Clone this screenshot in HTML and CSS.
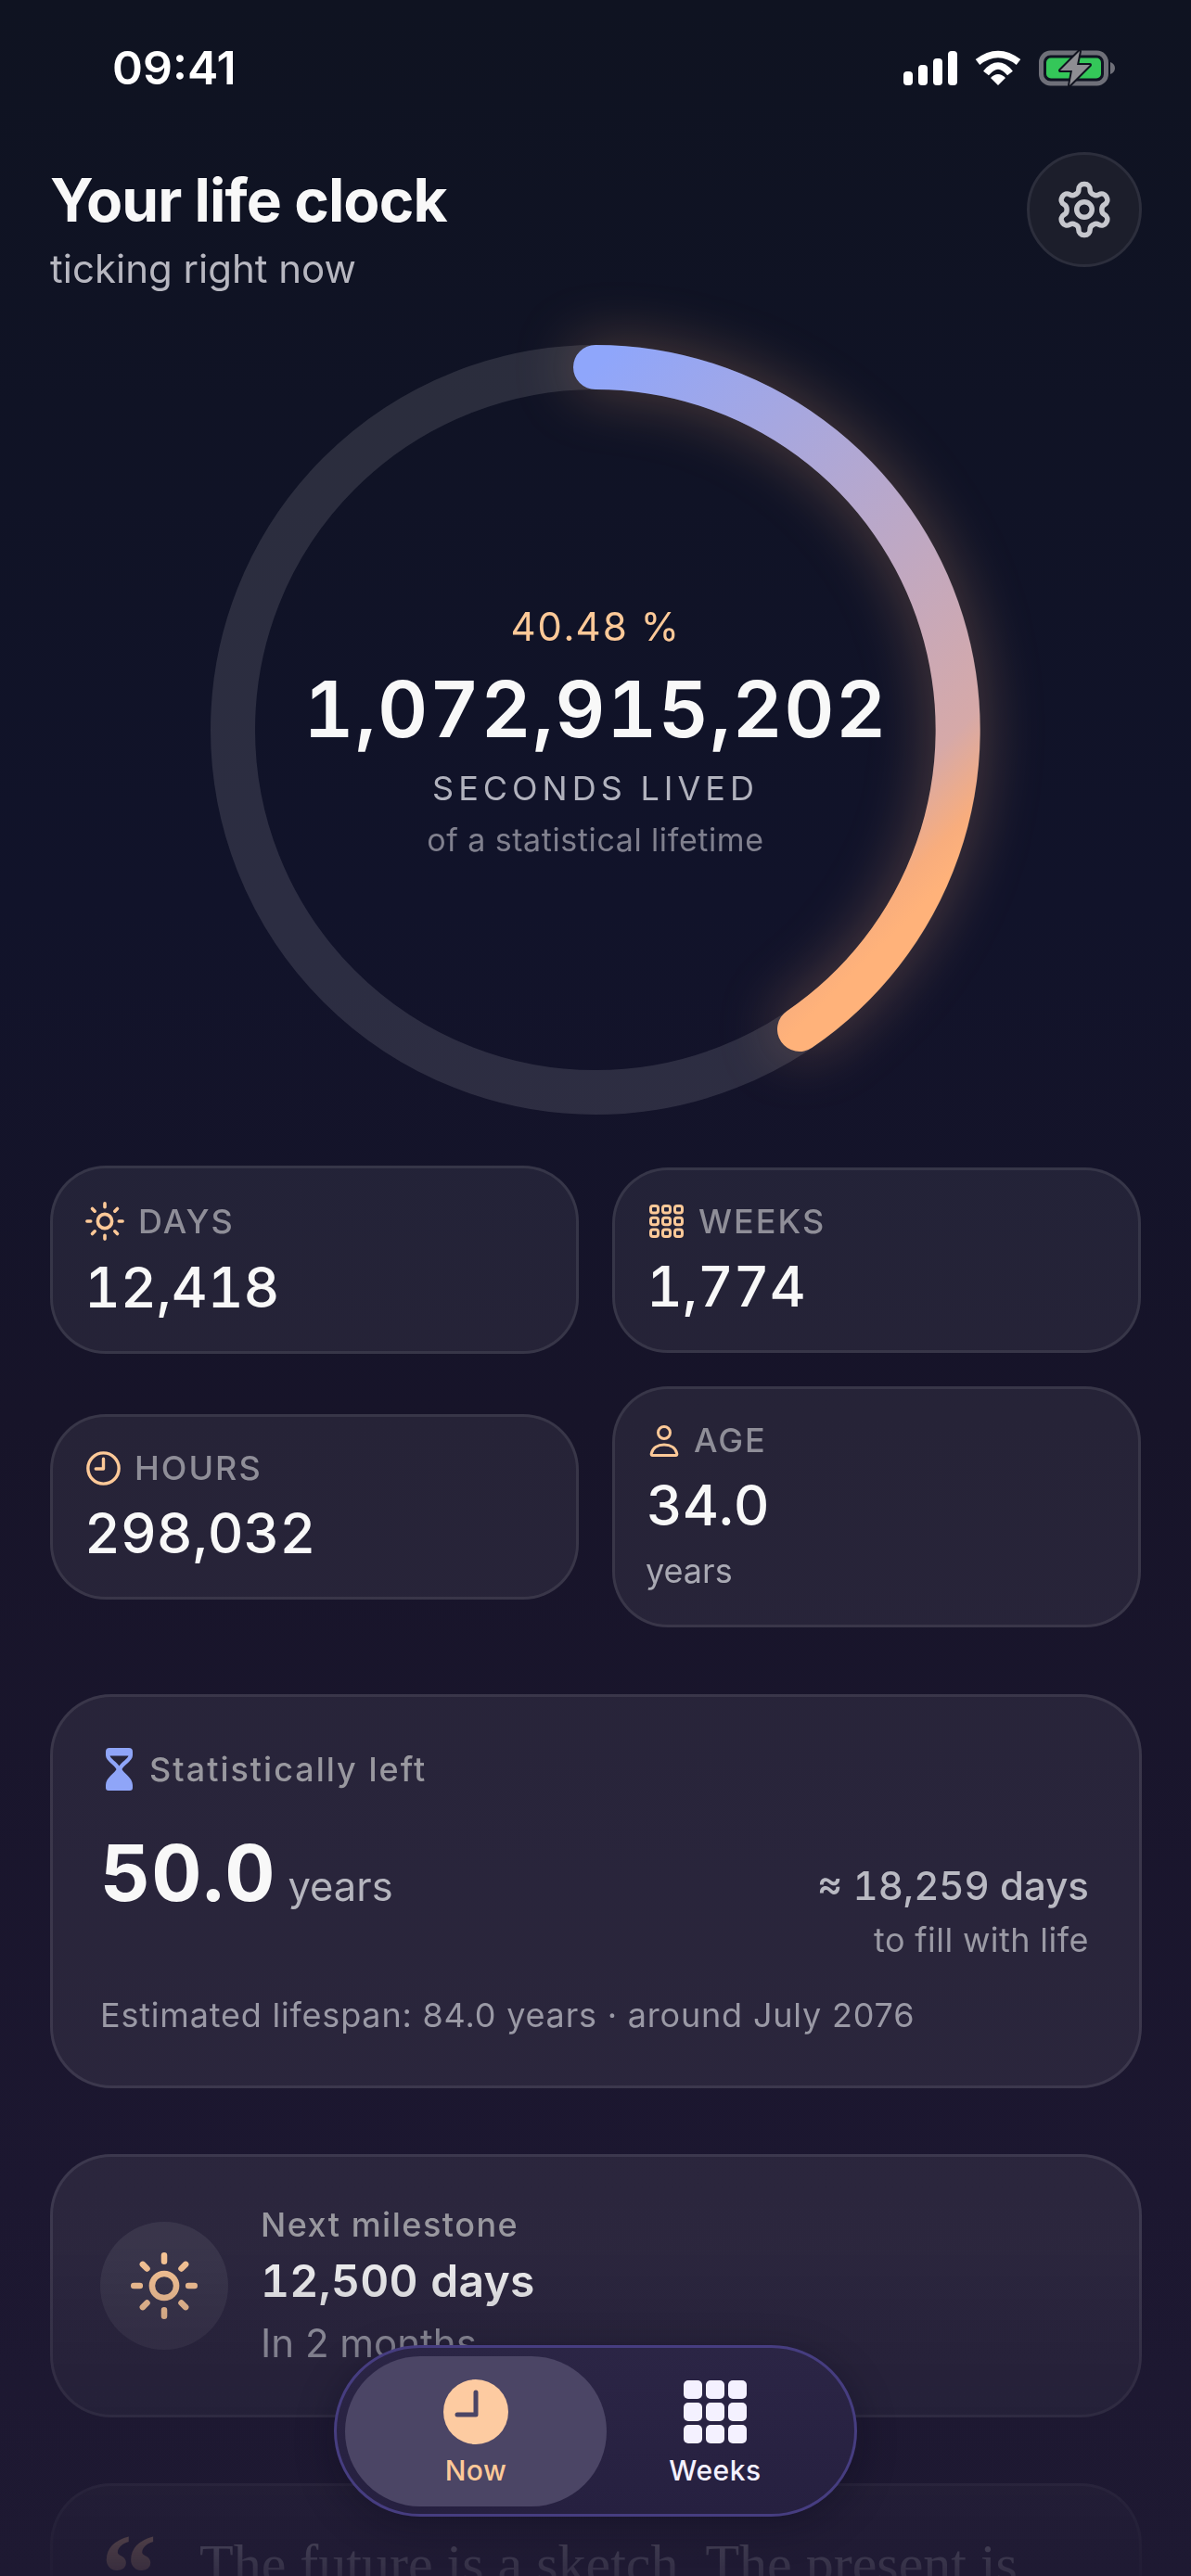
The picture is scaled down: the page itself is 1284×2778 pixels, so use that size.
FILE: index.html
```html
<!DOCTYPE html>
<html lang="en">
<head>
<meta charset="utf-8">
<title>Your life clock</title>
<link rel="stylesheet" href="styles.css">
</head>
<body>
<div class="app">
  <div class="screen">
    <div class="status">
      <span class="time">09:41</span>
      <div class="status-icons">
        <svg class="ic-signal" viewBox="0 0 58 37"><rect x="0" y="22" width="10" height="15" rx="4"/><rect x="16" y="15" width="10" height="22" rx="4"/><rect x="32" y="8" width="10" height="29" rx="4"/><rect x="48" y="0" width="10" height="37" rx="4"/></svg>
        <svg class="ic-wifi" viewBox="0 0 50 37"><path class="wifi-arc" d="M3 12Q25 -5 47 12"/><path class="wifi-arc" d="M12 24Q25 8 38 24"/><path class="wifi-dot" d="M25 37L17 29Q25 21 33 29Z"/></svg>
        <svg class="ic-battery" viewBox="0 0 82 39"><rect class="bat-body" x="2.5" y="3" width="70" height="33" rx="10"/><rect class="bat-fill" x="8" y="8.5" width="59" height="22" rx="5"/><path class="bat-cap" d="M77 13c3 1 5 3.5 5 6.5s-2 5.500-5 6.500z"/><path class="bat-bolt" d="M44 1L23 22H36L33 38L55 16H41Z"/></svg>
      </div>
    </div>

    <header class="head">
      <div>
        <h1 class="title">Your life clock</h1>
        <p class="subtitle">ticking right now</p>
      </div>
      <button class="gear" type="button" aria-label="Settings">
        <svg class="ic-gear" viewBox="0 0 24 24"><path d="M12.220 2h-.44a2 2 0 0 0-2 2v.18a2 2 0 0 1-1 1.730l-.43.25a2 2 0 0 1-2 0l-.15-.08a2 2 0 0 0-2.730.73l-.22.38a2 2 0 0 0 .73 2.730l.15.1a2 2 0 0 1 1 1.720v.51a2 2 0 0 1-1 1.740l-.15.09a2 2 0 0 0-.73 2.730l.22.38a2 2 0 0 0 2.730.73l.15-.08a2 2 0 0 1 2 0l.43.25a2 2 0 0 1 1 1.730V20a2 2 0 0 0 2 2h.44a2 2 0 0 0 2-2v-.18a2 2 0 0 1 1-1.730l.43-.25a2 2 0 0 1 2 0l.15.08a2 2 0 0 0 2.730-.73l.22-.39a2 2 0 0 0-.73-2.730l-.15-.08a2 2 0 0 1-1-1.740v-.5a2 2 0 0 1 1-1.740l.15-.09a2 2 0 0 0 .73-2.730l-.22-.38a2 2 0 0 0-2.730-.73l-.15.08a2 2 0 0 1-2 0l-.43-.25a2 2 0 0 1-1-1.730V4a2 2 0 0 0-2-2z"/><circle cx="12" cy="12" r="3"/></svg>
      </button>
    </header>

    <section class="ring">
      <svg class="ring-svg" viewBox="0 0 830 830">
        <defs>
          <linearGradient id="arc" gradientUnits="userSpaceOnUse" x1="415" y1="24" x2="881" y2="490">
            <stop offset="0" stop-color="#8fa6fb"/>
            <stop offset="0.84" stop-color="#d6a9a8"/>
            <stop offset="0.95" stop-color="#f8ad7d"/>
            <stop offset="1" stop-color="#ffb27a"/>
          </linearGradient>
        </defs>
        <circle class="ring-track" cx="415" cy="415" r="391"/>
        <path class="ring-arc" d="M415 24A391 391 0 0 1 635 738"/>
      </svg>
      <div class="ring-text">
        <div class="pct">40.48 %</div>
        <div class="seconds">1,072,915,202</div>
        <div class="seconds-label">SECONDS LIVED</div>
        <div class="seconds-sub">of a statistical lifetime</div>
      </div>
    </section>

    <section class="stats">
      <article class="card stat">
        <div class="stat-label">
          <svg class="ic ic-sun-s" viewBox="1 1 22 22"><circle cx="12" cy="12" r="4"/><path d="M12 2v2M12 20v2M4.930 4.930l1.410 1.410M17.660 17.660l1.410 1.410M2 12h2M20 12h2M6.340 17.660l-1.410 1.410M19.070 4.930l-1.410 1.410"/></svg>
          <span>DAYS</span>
        </div>
        <div class="stat-value">12,418</div>
      </article>
      <article class="card stat">
        <div class="stat-label">
          <svg class="ic ic-grid-s" viewBox="0 0 37 36"><rect x="1.500" y="1.500" width="8" height="7.500" rx="2.500"/><rect x="14.500" y="1.500" width="8" height="7.500" rx="2.500"/><rect x="27.500" y="1.500" width="8" height="7.500" rx="2.500"/><rect x="1.500" y="14.250" width="8" height="7.500" rx="2.500"/><rect x="14.500" y="14.250" width="8" height="7.500" rx="2.500"/><rect x="27.500" y="14.250" width="8" height="7.500" rx="2.500"/><rect x="1.500" y="27" width="8" height="7.500" rx="2.500"/><rect x="14.500" y="27" width="8" height="7.500" rx="2.500"/><rect x="27.500" y="27" width="8" height="7.500" rx="2.500"/></svg>
          <span>WEEKS</span>
        </div>
        <div class="stat-value">1,774</div>
      </article>
      <article class="card stat">
        <div class="stat-label">
          <svg class="ic ic-clock-s" viewBox="0 0 36 36"><circle cx="18" cy="18" r="16.200"/><path d="M18 8v10.500H10"/></svg>
          <span>HOURS</span>
        </div>
        <div class="stat-value">298,032</div>
      </article>
      <article class="card stat">
        <div class="stat-label">
          <svg class="ic ic-person-s" viewBox="0 0 32 34"><circle cx="16" cy="8" r="6.500"/><path d="M3.500 32.500h25c1 0 1.500-.7 1.300-1.700C28.500 24.500 23 21 16 21S3.500 24.500 2.200 30.800c-.2 1 .3 1.700 1.300 1.700z"/></svg>
          <span>AGE</span>
        </div>
        <div class="stat-value">34.0</div>
        <div class="stat-unit">years</div>
      </article>
    </section>

    <section class="card left-card">
      <div class="left-head">
        <svg class="ic-hourglass" viewBox="0 0 29 46"><path class="hg-body" d="M4 0H25a4 4 0 0 1 4 4V8C29 14 19 19 17.500 23C19 27 29 32 29 40V43a3 3 0 0 1-3 3H3a3 3 0 0 1-3-3V40C0 32 10 27 11.500 23C10 19 0 14 0 8V4a4 4 0 0 1 4-4Z"/><path class="hg-hole" d="M4.500 8.500H24.500C23.500 11.500 17 15.500 14.500 19.500C12 15.500 5.500 11.500 4.500 8.500Z"/></svg>
        <span>Statistically left</span>
      </div>
      <div class="left-main">
        <div class="left-years"><span class="left-num">50.0</span><span class="left-unit">years</span></div>
        <div class="left-side">
          <div class="left-days">≈ 18,259 days</div>
          <div class="left-fill">to fill with life</div>
        </div>
      </div>
      <p class="left-foot">Estimated lifespan: 84.0 years · around July 2076</p>
    </section>

    <section class="card milestone">
      <div class="mile-icon">
        <svg class="ic-sun-l" viewBox="1 1 22 22"><circle cx="12" cy="12" r="4"/><path d="M12 2v2M12 20v2M4.930 4.930l1.410 1.410M17.660 17.660l1.410 1.410M2 12h2M20 12h2M6.340 17.660l-1.410 1.410M19.070 4.930l-1.410 1.410"/></svg>
      </div>
      <div>
        <div class="mile-label">Next milestone</div>
        <div class="mile-value">12,500 days</div>
        <div class="mile-sub">In 2 months</div>
      </div>
    </section>

    <section class="card quote">
      <span class="quote-mark">“</span>
      <p class="quote-text">The future is a sketch. The present is</p>
    </section>
  </div>

  <nav class="nav">
    <div class="tab tab-active">
      <svg class="tab-icon" viewBox="0 0 70 70"><circle class="clock-face" cx="35" cy="35" r="35"/><path class="clock-hands" d="M35 14V38H15"/></svg>
      <span>Now</span>
    </div>
    <div class="tab tab-plain">
      <svg class="tab-icon" viewBox="0 0 70 70"><rect x="1" y="1" width="20" height="20" rx="5"/><rect x="25" y="1" width="20" height="20" rx="5"/><rect x="49" y="1" width="20" height="20" rx="5"/><rect x="1" y="25" width="20" height="20" rx="5"/><rect x="25" y="25" width="20" height="20" rx="5"/><rect x="49" y="25" width="20" height="20" rx="5"/><rect x="1" y="49" width="20" height="20" rx="5"/><rect x="25" y="49" width="20" height="20" rx="5"/><rect x="49" y="49" width="20" height="20" rx="5"/></svg>
      <span>Weeks</span>
    </div>
  </nav>
</div>
</body>
</html>
```

FILE: styles.css
```css
* { box-sizing: border-box; }
html, body { margin: 0; padding: 0; background: #10131f; }
body { font-family: Inter, "Liberation Sans", sans-serif; color: #f8f8f8; }
h1, p { margin: 0; }

.app {
  position: relative;
  width: 1284px;
  height: 2778px;
  overflow: hidden;
  background: linear-gradient(180deg, #0f1321 0%, #11132a 35%, #171429 55%, #1c1730 85%, #1e1932 100%);
}
.screen {
  height: 2778px;
  overflow: hidden;
  -webkit-mask-image: linear-gradient(180deg, #000 2420px, transparent 2820px);
  mask-image: linear-gradient(180deg, #000 2420px, transparent 2820px);
}

/* status bar */
.status {
  height: 164px;
  padding: 0 82px 18px 121px;
  display: flex;
  align-items: center;
  justify-content: space-between;
}
.time { font-size: 50px; font-weight: 600; color: #fff; line-height: 60px; }
.status-icons { display: flex; align-items: center; gap: 19px; }
.ic-signal { width: 58px; height: 37px; fill: #fff; }
.ic-wifi { width: 50px; height: 37px; overflow: visible; }
.wifi-arc { fill: none; stroke: #fff; stroke-width: 7.500; }
.wifi-dot { fill: #fff; }
.ic-battery { width: 82px; height: 39px; overflow: visible; }
.bat-body { fill: none; stroke: #6f7079; stroke-width: 5; }
.bat-fill { fill: #34c759; }
.bat-cap { fill: #6f7079; }
.bat-bolt { fill: #8e8e93; stroke: #10131f; stroke-width: 4; stroke-linejoin: round; paint-order: stroke; }

/* header */
.head {
  padding: 0 53px 0 54px;
  display: flex;
  align-items: flex-start;
  justify-content: space-between;
}
.title { margin-top: 16px; font-size: 64px; line-height: 72px; font-weight: 700; color: #f8f8f8; letter-spacing: -0.9px; }
.subtitle { margin-top: 13px; font-size: 42px; line-height: 50px; font-weight: 400; color: #b7b7c0; }
.gear {
  width: 124px;
  height: 124px;
  padding: 0;
  display: flex;
  align-items: center;
  justify-content: center;
  border-radius: 50%;
  border: 3px solid #2c2e3c;
  background: #1c1e2b;
}
.ic-gear { width: 66px; height: 66px; fill: none; stroke: #c6c7cd; stroke-width: 2; stroke-linecap: round; stroke-linejoin: round; }

/* ring */
.ring {
  margin: 57px auto 55px;
  width: 830px;
  height: 830px;
  display: grid;
  place-items: center;
}
.ring-svg, .ring-text { grid-area: 1 / 1; }
.ring-svg { width: 830px; height: 830px; overflow: visible; }
.ring-track { fill: none; stroke: rgba(255, 255, 255, 0.115); stroke-width: 48; }
.ring-arc {
  fill: none;
  stroke: url(#arc);
  stroke-width: 48;
  stroke-linecap: round;
  filter: drop-shadow(0 0 32px rgba(255, 178, 122, 0.3));
}
.ring-text { text-align: center; padding-top: 5px; font-variant-numeric: tabular-nums; }
.pct { font-size: 42px; line-height: 50px; color: #fdc998; letter-spacing: 1.5px; }
.seconds { margin-top: 14px; font-size: 84px; line-height: 100px; font-weight: 600; color: #f8f8f8; letter-spacing: 1.4px; white-space: nowrap; }
.seconds-label { margin-top: 13px; font-size: 36px; line-height: 44px; color: #b1b2bd; letter-spacing: 5px; }
.seconds-sub { margin-top: 12px; font-size: 34px; line-height: 44px; color: #80808e; letter-spacing: .6px; }

/* cards */
.card {
  border: 3px solid rgba(255, 255, 255, 0.085);
  background: rgba(255, 255, 255, 0.065);
  border-radius: 66px;
}
.stats {
  padding: 0 54px;
  display: grid;
  grid-template-columns: 570px 570px;
  column-gap: 36px;
  row-gap: 35px;
  align-items: center;
}
.stat { padding: 36px 33px; border-radius: 60px; }
.stat-label {
  display: flex;
  align-items: center;
  gap: 16px;
  font-size: 36px;
  line-height: 39px;
  font-weight: 500;
  color: #8f8e98;
  letter-spacing: 2px;
}
.ic { flex: none; fill: none; stroke: #fdc998; stroke-linecap: round; stroke-linejoin: round; }
.ic-sun-s { width: 42px; height: 42px; stroke-width: 1.900; margin-left: 2px; margin-right: -1px; }
.ic-grid-s { width: 37px; height: 36px; stroke-width: 3; margin-left: 4px; }
.ic-clock-s { width: 37px; height: 37px; stroke-width: 3.300; margin-left: 3px; margin-right: -1px; }
.ic-person-s { width: 32px; height: 34px; stroke-width: 3; margin-left: 4px; }
.stat-value { margin-top: 17px; padding-left: 1px; font-size: 60px; line-height: 66px; font-weight: 500; color: #f8f8f8; font-variant-numeric: tabular-nums; }
.stat-unit { margin-top: 16px; font-size: 36px; line-height: 44px; color: #a9a9b3; }

.left-card { margin: 72px 53px 0 54px; padding: 54px 54px 52px 51px; }
.left-head { display: flex; align-items: center; gap: 18px; height: 48px; font-size: 36px; font-weight: 500; color: #99989f; letter-spacing: 2px; }
.ic-hourglass { width: 29px; height: 46px; margin-left: 6px; }
.hg-body { fill: #8fa5f8; }
.hg-hole { fill: #272539; }
.left-main { margin-top: 38px; display: flex; justify-content: space-between; align-items: flex-start; font-variant-numeric: tabular-nums; }
.left-years { display: flex; align-items: baseline; gap: 13px; line-height: 100px; }
.left-num { font-size: 84px; font-weight: 700; color: #f8f8f8; letter-spacing: 1px; }
.left-unit { font-size: 43.5px; color: #b5b5be; }
.left-side { padding-top: 34px; text-align: right; }
.left-days { font-size: 42px; line-height: 60px; font-weight: 500; color: #b9b9c2; }
.left-fill { margin-top: 4px; font-size: 36px; line-height: 48px; color: #9b9aa5; letter-spacing: .5px; }
.left-foot { margin-top: 33px; font-size: 36px; line-height: 48px; color: #9a99a5; white-space: nowrap; letter-spacing: .8px; }

.milestone { margin: 71px 53px 0 54px; padding: 49px 51px; display: flex; align-items: center; gap: 35px; }
.mile-icon { flex: none; width: 138px; height: 138px; border-radius: 50%; background: rgba(255, 255, 255, 0.07); display: flex; align-items: center; justify-content: center; }
.ic-sun-l { width: 72px; height: 72px; fill: none; stroke: #fdc998; stroke-width: 2; stroke-linecap: round; }
.mile-label { font-size: 36px; line-height: 48px; font-weight: 500; color: #99989f; letter-spacing: 1.500px; }
.mile-value { margin-top: 5px; font-size: 48px; line-height: 64px; font-weight: 600; color: #f8f8f8; font-variant-numeric: tabular-nums; letter-spacing: .3px; }
.mile-sub { margin-top: 7px; font-size: 42px; line-height: 56px; color: #a9a9b3; }

.quote { margin: 71px 53px 0 54px; padding: 48px 57px; height: 300px; display: flex; gap: 43px; }
.quote-mark { flex: none; width: 58px; height: 72px; margin-top: -13px; margin-left: -5px; margin-right: 5px; font-family: "Liberation Serif", serif; font-size: 120px; line-height: 120px; font-weight: 700; color: #fdc998; }
.quote-text { font-family: "Liberation Serif", serif; font-size: 60px; line-height: 72px; color: #d8d8de; white-space: nowrap; }

/* bottom nav */
.nav {
  position: absolute;
  left: 360px;
  top: 2529px;
  width: 564px;
  height: 185px;
  padding: 9px;
  display: flex;
  border-radius: 93px;
  border: 3px solid #463d80;
  background: linear-gradient(180deg, #2b2545 0%, #262040 100%);
  box-shadow: 0 10px 40px rgba(10, 8, 24, 0.35);
}
.tab { height: 162px; padding-top: 25px; display: flex; flex-direction: column; align-items: center; font-size: 30px; line-height: 40px; font-weight: 500; }
.tab span { margin-top: 8px; letter-spacing: .5px; }
.tab-icon { width: 70px; height: 70px; flex: none; }
.tab-active { width: 282px; border-radius: 81px; background: #4b4565; color: #fdc998; }
.tab-plain { width: 234px; color: #f4f1ff; fill: #f4f1ff; }
.clock-face { fill: #fdcba1; }
.clock-hands { fill: none; stroke: #4b4565; stroke-width: 5; stroke-linecap: round; stroke-linejoin: round; }
```
